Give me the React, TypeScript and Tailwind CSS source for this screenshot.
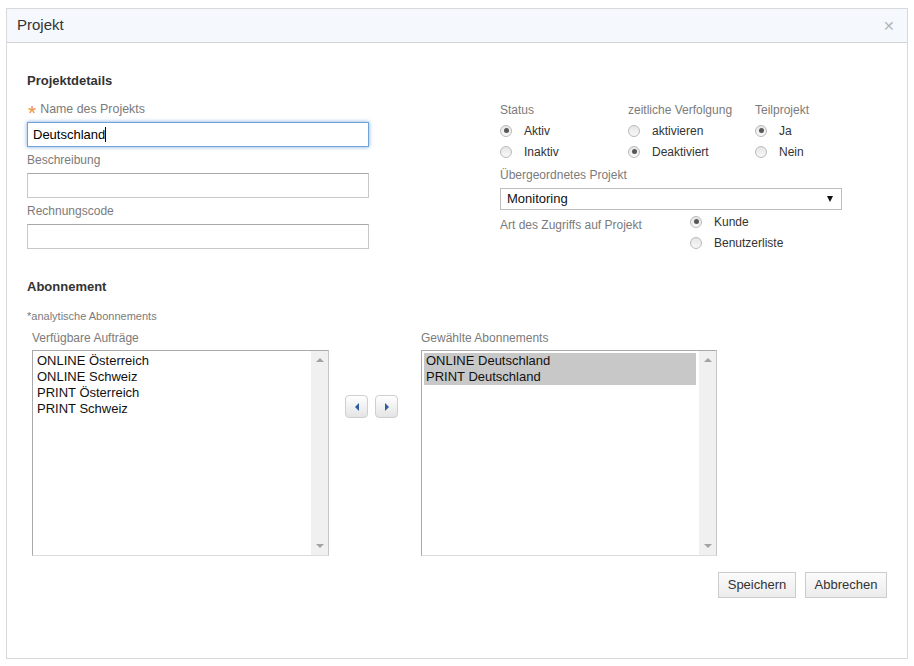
import React from 'react';

function Radio({ checked }: { checked?: boolean }) {
  return (
    <span className="w-[12px] h-[12px] rounded-full border border-[#bababa] bg-gradient-to-b from-[#e6e6e6] to-[#f8f8f8] flex items-center justify-center shrink-0">
      {checked && <span className="w-[5px] h-[5px] rounded-full bg-[#575757]" />}
    </span>
  );
}

function RadioRow({ label, checked }: { label: string; checked?: boolean }) {
  return (
    <div className="h-[21px] flex items-center gap-[12px]">
      <Radio checked={checked} />
      <span className="text-[12px] text-[#333]">{label}</span>
    </div>
  );
}

function Label({ children }: { children: React.ReactNode }) {
  return <div className="h-[16px] flex items-center text-[12px] text-[#7b7b7b]">{children}</div>;
}

function TextBox() {
  return <div className="mt-[5px] h-[25px] border border-[#c8c8c8] border-t-[#a8a8a8] bg-white" />;
}

function ListBox({ items, selected }: { items: string[]; selected?: boolean }) {
  return (
    <div className="mt-[4px] h-[206px] flex border border-[#a9a9a9] border-r-[#c6c6c6] border-b-[#dcdcdc] bg-white">
      <div className="flex-1 pt-[2px] pl-[2px] pr-[3px]">
        <div className={selected ? 'bg-[#c8c8c8]' : ''}>
          {items.map((it) => (
            <div key={it} className="h-[16px] leading-[16px] pl-[2px] text-[13px] text-[#111]">
              {it}
            </div>
          ))}
        </div>
      </div>
      <div className="w-[17px] bg-[#f0f0f0] flex flex-col items-center justify-between py-[7px]">
        <span className="w-0 h-0 border-x-[4px] border-x-transparent border-b-[4px] border-b-[#a3a3a3]" />
        <span className="w-0 h-0 border-x-[4px] border-x-transparent border-t-[4px] border-t-[#a3a3a3]" />
      </div>
    </div>
  );
}

function ArrowButton({ dir }: { dir: 'left' | 'right' }) {
  return (
    <button className="w-[23px] h-[23px] rounded-[4px] border border-[#cfcfcf] bg-gradient-to-b from-white to-[#e4e4e4] flex items-center justify-center">
      {dir === 'left' ? (
        <span className="w-0 h-0 border-y-[4px] border-y-transparent border-r-[4px] border-r-[#2d5f9e]" />
      ) : (
        <span className="w-0 h-0 border-y-[4px] border-y-transparent border-l-[4px] border-l-[#2d5f9e]" />
      )}
    </button>
  );
}

function FooterButton({ children, w }: { children: React.ReactNode; w: string }) {
  return (
    <button
      className={`${w} h-[26px] border border-[#cccccc] bg-gradient-to-b from-[#fbfbfb] to-[#ececec] text-[13px] text-[#333]`}
    >
      {children}
    </button>
  );
}

export default function App() {
  return (
    <div className="min-h-screen bg-white pt-[8px] pl-[6px] font-['Liberation_Sans',Arial,sans-serif]">
      <div className="w-[902px] h-[651px] border border-[#d9d9d9] flex flex-col">
        {/* Header */}
        <div className="h-[34px] shrink-0 bg-[#f5f9fd] border-b border-[#d3d3d3] flex items-center justify-between pl-[10px] pr-[12px]">
          <span className="text-[15px] text-[#333]">Projekt</span>
          <span className="text-[14px] text-[#b5b5b5] leading-none">✕</span>
        </div>

        <div className="px-[20px] pt-[30px]">
          <div className="h-[16px] flex items-center text-[13px] font-bold text-[#333]">Projektdetails</div>

          {/* Projektdetails columns */}
          <div className="mt-[12px] h-[152px] flex">
            <div className="w-[342px]">
              <div className="h-[16px] flex items-center text-[12px] text-[#7b7b7b]">
                <span className="text-[21px] leading-none text-[#f0903c] ml-[1px] mr-[4px] mt-[6px]">*</span>
                <span className="text-[12.4px]">Name des Projekts</span>
              </div>
              <div className="mt-[5px] h-[25px] border border-[#72a3d8] shadow-[0_0_4px_rgba(80,140,210,0.75)] bg-white flex items-center pl-[5px] text-[13px] text-black">
                Deutschland
                <span className="w-[1px] h-[15px] bg-black" />
              </div>
              <div className="mt-[5px]">
                <Label>Beschreibung</Label>
              </div>
              <TextBox />
              <div className="mt-[5px]">
                <Label>Rechnungscode</Label>
              </div>
              <TextBox />
            </div>

            <div className="ml-[131px] w-[342px] pt-[1px]">
              <div className="flex">
                <div className="w-[128px]">
                  <Label>Status</Label>
                  <div className="mt-[2px]">
                    <RadioRow label="Aktiv" checked />
                    <RadioRow label="Inaktiv" />
                  </div>
                </div>
                <div className="w-[127px]">
                  <Label>zeitliche Verfolgung</Label>
                  <div className="mt-[2px]">
                    <RadioRow label="aktivieren" />
                    <RadioRow label="Deaktiviert" checked />
                  </div>
                </div>
                <div className="flex-1">
                  <Label>Teilprojekt</Label>
                  <div className="mt-[2px]">
                    <RadioRow label="Ja" checked />
                    <RadioRow label="Nein" />
                  </div>
                </div>
              </div>
              <div className="mt-[5px]">
                <Label>Übergeordnetes Projekt</Label>
              </div>
              <div className="mt-[5px] h-[22px] border border-[#bdbdbd] bg-white flex items-center justify-between pl-[6px] pr-[8px]">
                <span className="text-[13px] text-[#111]">Monitoring</span>
                <span className="w-0 h-0 border-x-[3px] border-x-transparent border-t-[6px] border-t-[#111]" />
              </div>
              <div className="mt-[1px] flex">
                <div className="w-[190px] pt-[6px]">
                  <Label>Art des Zugriffs auf Projekt</Label>
                </div>
                <div>
                  <RadioRow label="Kunde" checked />
                  <RadioRow label="Benutzerliste" />
                </div>
              </div>
            </div>
          </div>

          {/* Abonnement */}
          <div className="mt-[26px] h-[16px] flex items-center text-[13px] font-bold text-[#333]">Abonnement</div>
          <div className="mt-[14px] h-[14px] flex items-center text-[11px] text-[#7b7b7b]">*analytische Abonnements</div>

          <div className="mt-[7px] flex items-start">
            <div className="ml-[5px] w-[297px]">
              <Label>Verfügbare Aufträge</Label>
              <ListBox items={['ONLINE Österreich', 'ONLINE Schweiz', 'PRINT Österreich', 'PRINT Schweiz']} />
            </div>
            <div className="ml-[16px] mt-[65px] flex gap-[7px]">
              <ArrowButton dir="left" />
              <ArrowButton dir="right" />
            </div>
            <div className="ml-[23px] w-[296px]">
              <Label>Gewählte Abonnements</Label>
              <ListBox items={['ONLINE Deutschland', 'PRINT Deutschland']} selected />
            </div>
          </div>

          <div className="mt-[16px] flex justify-end gap-[9px]">
            <FooterButton w="w-[78px]">Speichern</FooterButton>
            <FooterButton w="w-[82px]">Abbrechen</FooterButton>
          </div>
        </div>
      </div>
    </div>
  );
}
